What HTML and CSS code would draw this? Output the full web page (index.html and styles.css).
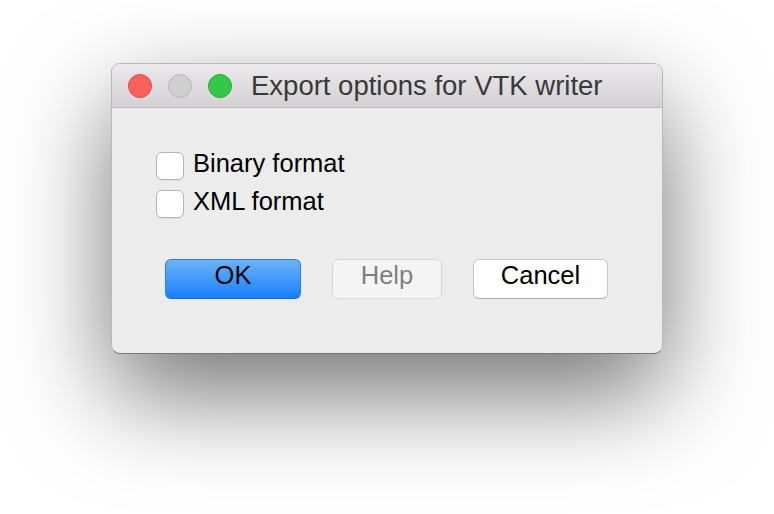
FILE: index.html
```html
<!DOCTYPE html>
<html>
<head>
<meta charset="utf-8">
<link rel="stylesheet" href="styles.css">
</head>
<body>
<div class="stage">
  <div class="window">
    <div class="titlebar">
      <div class="lights">
        <span class="light close"></span>
        <span class="light mini"></span>
        <span class="light zoom"></span>
      </div>
      <div class="title">Export options for VTK writer</div>
    </div>
    <div class="content">
      <div class="options">
        <label class="option"><span class="check"></span><span class="label">Binary format</span></label>
        <label class="option"><span class="check"></span><span class="label">XML format</span></label>
      </div>
      <div class="buttons">
        <button class="btn ok">OK</button>
        <button class="btn help" disabled>Help</button>
        <button class="btn cancel">Cancel</button>
      </div>
    </div>
  </div>
</div>
</body>
</html>
```
FILE: styles.css
```css
html, body {
  margin: 0;
  padding: 0;
  background: #ffffff;
  width: 774px;
  height: 514px;
  overflow: hidden;
}
body {
  font-family: "Liberation Sans", Arial, sans-serif;
}
.stage {
  padding: 63px 0 0 111px;
}
.window {
  width: 550px;
  height: 289px;
  border: 1px solid rgba(0, 0, 0, 0.22);
  border-bottom-color: rgba(0, 0, 0, 0.5);
  border-radius: 9px;
  background: #ececec;
  box-shadow: 0 40px 100px rgba(0, 0, 0, 0.55);
  overflow: hidden;
  display: flex;
  flex-direction: column;
}
.titlebar {
  height: 43px;
  flex: none;
  border-bottom: 1px solid #bcbabc;
  background: linear-gradient(#ebe9eb, #d3d1d3);
  display: flex;
  align-items: center;
}
.lights {
  display: flex;
  gap: 16px;
  padding-left: 16px;
}
.light {
  width: 22px;
  height: 22px;
  border-radius: 50%;
  box-sizing: content-box;
  border: 1px solid;
}
.close { background: #fc605c; border-color: #de4a45; }
.mini  { background: #d0cfd0; border-color: #b8b7b8; }
.zoom  { background: #34c84a; border-color: #20ad33; }
.title {
  margin-left: 19px;
  font-size: 27.5px;
  color: #3a3839;
  line-height: 32px;
  margin-top: 1px;
}
.content {
  padding: 44px 0 0 44px;
  display: flex;
  flex-direction: column;
}
.options {
  display: flex;
  flex-direction: column;
  gap: 10px;
}
.option {
  display: flex;
  align-items: center;
  height: 28px;
}
.check {
  width: 26px;
  height: 26px;
  border: 1px solid #b4b4b4;
  border-radius: 6px;
  background: #ffffff;
  box-shadow: 0 1px 1px rgba(0, 0, 0, 0.06);
}
.label {
  margin-left: 9px;
  font-size: 25.5px;
  color: #000;
  line-height: 28px;
  margin-top: -7px;
}
.buttons {
  display: flex;
  gap: 31px;
  margin-top: 41px;
  padding-left: 9px;
}
.btn {
  font-family: "Liberation Sans", Arial, sans-serif;
  font-size: 25.5px;
  height: 40px;
  border-radius: 6px;
  padding: 0 0 13px 0;
  line-height: 30px;
  box-sizing: border-box;
  color: #000;
}
.ok {
  width: 136px;
  background: linear-gradient(#6cb3fa, #1a7ffb);
  border: 1px solid #2a7ef0;
  border-bottom-color: #1667e0;
}
.help {
  width: 110px;
  background: #f4f4f4;
  border: 1px solid #d6d6d6;
  color: #7f7f7f;
}
.cancel {
  width: 135px;
  background: #ffffff;
  border: 1px solid #c6c6c6;
  border-bottom-color: #acacac;
}
```
